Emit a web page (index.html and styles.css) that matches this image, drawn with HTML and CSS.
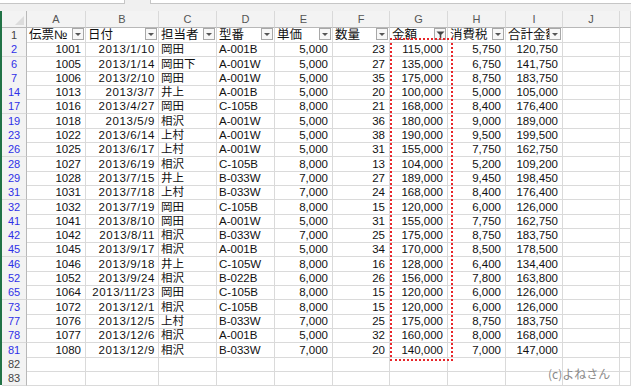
FILE: index.html
```html
<!DOCTYPE html>
<html lang="ja">
<head>
<meta charset="utf-8">
<title>Sheet</title>
<link rel="stylesheet" href="styles.css">
</head>
<body>
<div class="app">
  <div class="topbar"><div class="namebox"></div><div class="fx"></div></div>
  <div class="sheet">
    <div class="row colhead">
      <div class="corner"><svg width="9" height="9" viewBox="0 0 9 9"><polygon points="9,0 9,9 0,9" fill="#dcdcdc"/></svg></div>
      <div class="ch">A</div><div class="ch">B</div><div class="ch">C</div><div class="ch">D</div><div class="ch">E</div><div class="ch">F</div><div class="ch">G</div><div class="ch">H</div><div class="ch">I</div><div class="ch">J</div><div class="ch"></div>
    </div>
    <div class="row hdr">
      <div class="rh">1</div>
      <div class="c h">伝票№<span class="dd"><i></i></span></div>
      <div class="c h">日付<span class="dd"><i></i></span></div>
      <div class="c h">担当者<span class="dd"><i></i></span></div>
      <div class="c h">型番<span class="dd"><i></i></span></div>
      <div class="c h">単価<span class="dd"><i></i></span></div>
      <div class="c h">数量<span class="dd"><i></i></span></div>
      <div class="c h">金額<span class="dd flt"><svg width="9" height="9" viewBox="0 0 9 9"><polygon points="0.5,1.5 8.5,1.5 5.3,4.8 5.3,8.5 3.7,7.5 3.7,4.8" fill="#444"/></svg></span></div>
      <div class="c h">消費税<span class="dd"><i></i></span></div>
      <div class="c h">合計金額<span class="dd"><i></i></span></div>
      <div class="c"></div><div class="c"></div>
    </div>
    <div class="row"><div class="rh f">2</div><div class="c n">1001</div><div class="c n d">2013/1/10</div><div class="c">岡田</div><div class="c">A-001B</div><div class="c n">5,000</div><div class="c n">23</div><div class="c n">115,000</div><div class="c n">5,750</div><div class="c n">120,750</div><div class="c"></div><div class="c"></div></div>
    <div class="row"><div class="rh f">6</div><div class="c n">1005</div><div class="c n d">2013/1/14</div><div class="c">岡田下</div><div class="c">A-001W</div><div class="c n">5,000</div><div class="c n">27</div><div class="c n">135,000</div><div class="c n">6,750</div><div class="c n">141,750</div><div class="c"></div><div class="c"></div></div>
    <div class="row"><div class="rh f">7</div><div class="c n">1006</div><div class="c n d">2013/2/10</div><div class="c">岡田</div><div class="c">A-001W</div><div class="c n">5,000</div><div class="c n">35</div><div class="c n">175,000</div><div class="c n">8,750</div><div class="c n">183,750</div><div class="c"></div><div class="c"></div></div>
    <div class="row"><div class="rh f">14</div><div class="c n">1013</div><div class="c n d">2013/3/7</div><div class="c">井上</div><div class="c">A-001B</div><div class="c n">5,000</div><div class="c n">20</div><div class="c n">100,000</div><div class="c n">5,000</div><div class="c n">105,000</div><div class="c"></div><div class="c"></div></div>
    <div class="row"><div class="rh f">17</div><div class="c n">1016</div><div class="c n d">2013/4/27</div><div class="c">岡田</div><div class="c">C-105B</div><div class="c n">8,000</div><div class="c n">21</div><div class="c n">168,000</div><div class="c n">8,400</div><div class="c n">176,400</div><div class="c"></div><div class="c"></div></div>
    <div class="row"><div class="rh f">19</div><div class="c n">1018</div><div class="c n d">2013/5/9</div><div class="c">相沢</div><div class="c">A-001W</div><div class="c n">5,000</div><div class="c n">36</div><div class="c n">180,000</div><div class="c n">9,000</div><div class="c n">189,000</div><div class="c"></div><div class="c"></div></div>
    <div class="row"><div class="rh f">23</div><div class="c n">1022</div><div class="c n d">2013/6/14</div><div class="c">上村</div><div class="c">A-001W</div><div class="c n">5,000</div><div class="c n">38</div><div class="c n">190,000</div><div class="c n">9,500</div><div class="c n">199,500</div><div class="c"></div><div class="c"></div></div>
    <div class="row"><div class="rh f">26</div><div class="c n">1025</div><div class="c n d">2013/6/17</div><div class="c">上村</div><div class="c">A-001W</div><div class="c n">5,000</div><div class="c n">31</div><div class="c n">155,000</div><div class="c n">7,750</div><div class="c n">162,750</div><div class="c"></div><div class="c"></div></div>
    <div class="row"><div class="rh f">28</div><div class="c n">1027</div><div class="c n d">2013/6/19</div><div class="c">相沢</div><div class="c">C-105B</div><div class="c n">8,000</div><div class="c n">13</div><div class="c n">104,000</div><div class="c n">5,200</div><div class="c n">109,200</div><div class="c"></div><div class="c"></div></div>
    <div class="row"><div class="rh f">29</div><div class="c n">1028</div><div class="c n d">2013/7/15</div><div class="c">井上</div><div class="c">B-033W</div><div class="c n">7,000</div><div class="c n">27</div><div class="c n">189,000</div><div class="c n">9,450</div><div class="c n">198,450</div><div class="c"></div><div class="c"></div></div>
    <div class="row"><div class="rh f">31</div><div class="c n">1031</div><div class="c n d">2013/7/18</div><div class="c">上村</div><div class="c">B-033W</div><div class="c n">7,000</div><div class="c n">24</div><div class="c n">168,000</div><div class="c n">8,400</div><div class="c n">176,400</div><div class="c"></div><div class="c"></div></div>
    <div class="row"><div class="rh f">32</div><div class="c n">1032</div><div class="c n d">2013/7/19</div><div class="c">岡田</div><div class="c">C-105B</div><div class="c n">8,000</div><div class="c n">15</div><div class="c n">120,000</div><div class="c n">6,000</div><div class="c n">126,000</div><div class="c"></div><div class="c"></div></div>
    <div class="row"><div class="rh f">41</div><div class="c n">1041</div><div class="c n d">2013/8/10</div><div class="c">岡田</div><div class="c">A-001W</div><div class="c n">5,000</div><div class="c n">31</div><div class="c n">155,000</div><div class="c n">7,750</div><div class="c n">162,750</div><div class="c"></div><div class="c"></div></div>
    <div class="row"><div class="rh f">42</div><div class="c n">1042</div><div class="c n d">2013/8/11</div><div class="c">相沢</div><div class="c">B-033W</div><div class="c n">7,000</div><div class="c n">25</div><div class="c n">175,000</div><div class="c n">8,750</div><div class="c n">183,750</div><div class="c"></div><div class="c"></div></div>
    <div class="row"><div class="rh f">45</div><div class="c n">1045</div><div class="c n d">2013/9/17</div><div class="c">相沢</div><div class="c">A-001B</div><div class="c n">5,000</div><div class="c n">34</div><div class="c n">170,000</div><div class="c n">8,500</div><div class="c n">178,500</div><div class="c"></div><div class="c"></div></div>
    <div class="row"><div class="rh f">46</div><div class="c n">1046</div><div class="c n d">2013/9/18</div><div class="c">井上</div><div class="c">C-105W</div><div class="c n">8,000</div><div class="c n">16</div><div class="c n">128,000</div><div class="c n">6,400</div><div class="c n">134,400</div><div class="c"></div><div class="c"></div></div>
    <div class="row"><div class="rh f">52</div><div class="c n">1052</div><div class="c n d">2013/9/24</div><div class="c">相沢</div><div class="c">B-022B</div><div class="c n">6,000</div><div class="c n">26</div><div class="c n">156,000</div><div class="c n">7,800</div><div class="c n">163,800</div><div class="c"></div><div class="c"></div></div>
    <div class="row"><div class="rh f">65</div><div class="c n">1064</div><div class="c n d">2013/11/23</div><div class="c">岡田</div><div class="c">C-105B</div><div class="c n">8,000</div><div class="c n">15</div><div class="c n">120,000</div><div class="c n">6,000</div><div class="c n">126,000</div><div class="c"></div><div class="c"></div></div>
    <div class="row"><div class="rh f">73</div><div class="c n">1072</div><div class="c n d">2013/12/1</div><div class="c">相沢</div><div class="c">C-105B</div><div class="c n">8,000</div><div class="c n">15</div><div class="c n">120,000</div><div class="c n">6,000</div><div class="c n">126,000</div><div class="c"></div><div class="c"></div></div>
    <div class="row"><div class="rh f">77</div><div class="c n">1076</div><div class="c n d">2013/12/5</div><div class="c">上村</div><div class="c">B-033W</div><div class="c n">7,000</div><div class="c n">25</div><div class="c n">175,000</div><div class="c n">8,750</div><div class="c n">183,750</div><div class="c"></div><div class="c"></div></div>
    <div class="row"><div class="rh f">78</div><div class="c n">1077</div><div class="c n d">2013/12/6</div><div class="c">相沢</div><div class="c">A-001B</div><div class="c n">5,000</div><div class="c n">32</div><div class="c n">160,000</div><div class="c n">8,000</div><div class="c n">168,000</div><div class="c"></div><div class="c"></div></div>
    <div class="row"><div class="rh f">81</div><div class="c n">1080</div><div class="c n d">2013/12/9</div><div class="c">相沢</div><div class="c">B-033W</div><div class="c n">7,000</div><div class="c n">20</div><div class="c n">140,000</div><div class="c n">7,000</div><div class="c n">147,000</div><div class="c"></div><div class="c"></div></div>
    <div class="row"><div class="rh">82</div><div class="c"></div><div class="c"></div><div class="c"></div><div class="c"></div><div class="c"></div><div class="c"></div><div class="c"></div><div class="c"></div><div class="c"></div><div class="c"></div><div class="c"></div></div>
    <div class="row"><div class="rh">83</div><div class="c"></div><div class="c"></div><div class="c"></div><div class="c"></div><div class="c"></div><div class="c"></div><div class="c"></div><div class="c"></div><div class="c"></div><div class="c"></div><div class="c"></div></div>
  </div>
  <div class="marquee"></div>
  <div class="wm">(c)よねさん</div>
</div>
</body>
</html>
```

FILE: styles.css
```css
* { box-sizing: border-box; }
html, body { margin: 0; padding: 0; background: #fff; }
body {
  width: 631px;
  height: 390px;
  overflow: hidden;
  font-family: "Liberation Sans", "Noto Sans CJK JP", sans-serif;
  color: #111;
}
.app { position: relative; width: 631px; height: 390px; overflow: hidden; }

.topbar {
  height: 11px;
  background: #f0f0f0;
  display: flex;
  gap: 25px;
}
.namebox, .fx {
  height: 4px;
  background: #fff;
  border: 1px solid #c6c6c6;
  border-top: 0;
}
.namebox { width: 125px; border-left: 0; }
.fx { flex: 1; border-right: 0; }

.sheet { border-left: 2px solid #217346; }

.row {
  display: grid;
  grid-template-columns: 25px 59px 73px 58px 58px 58px 57px 58px 58px 57px 57px 1fr;
  height: 14.3px;
}
.row.colhead { height: 17px; }

.corner, .ch {
  background: #f3f3f3;
  border-right: 1px solid #d9d9d9;
  border-bottom: 1px solid #b8b8b8;
}
.corner {
  display: flex;
  align-items: flex-end;
  justify-content: flex-end;
  padding: 0 2px 2px 0;
  border-right-color: #b8b8b8;
}
.ch {
  font-size: 11px;
  color: #555;
  text-align: center;
  line-height: 16px;
}

.rh {
  background: #f3f3f3;
  border-right: 1px solid #b8b8b8;
  border-bottom: 1px solid #d9d9d9;
  font-size: 11px;
  color: #444;
  text-align: center;
  line-height: 14px;
}
.rh.f { color: #3030e8; }

.c {
  position: relative;
  border-right: 1px solid #dadada;
  border-bottom: 1px solid #dadada;
  font-size: 11.5px;
  line-height: 14px;
  white-space: nowrap;
  overflow: hidden;
  padding: 0 2px;
}
.c.n { text-align: right; padding-right: 4px; }
.c.d { letter-spacing: 0.6px; padding-right: 3px; }
.c.h { font-size: 12.5px; padding-left: 2px; }

.dd {
  position: absolute;
  right: 1px;
  top: 0;
  width: 12px;
  height: 12px;
  background: #f7f7f7;
  border: 1px solid #a8a8a8;
  display: flex;
  align-items: center;
  justify-content: center;
}
.dd i {
  width: 0;
  height: 0;
  border-left: 3px solid transparent;
  border-right: 3px solid transparent;
  border-top: 3px solid #555;
}

.marquee {
  position: absolute;
  left: 390px;
  top: 38px;
  width: 63px;
  height: 323px;
  border: 2px dotted #e8262a;
}
.wm {
  position: absolute;
  left: 548px;
  top: 366px;
  font-size: 12px;
  color: #8a8a8a;
  font-family: "Noto Sans CJK JP", sans-serif;
  line-height: 16px;
}
```
